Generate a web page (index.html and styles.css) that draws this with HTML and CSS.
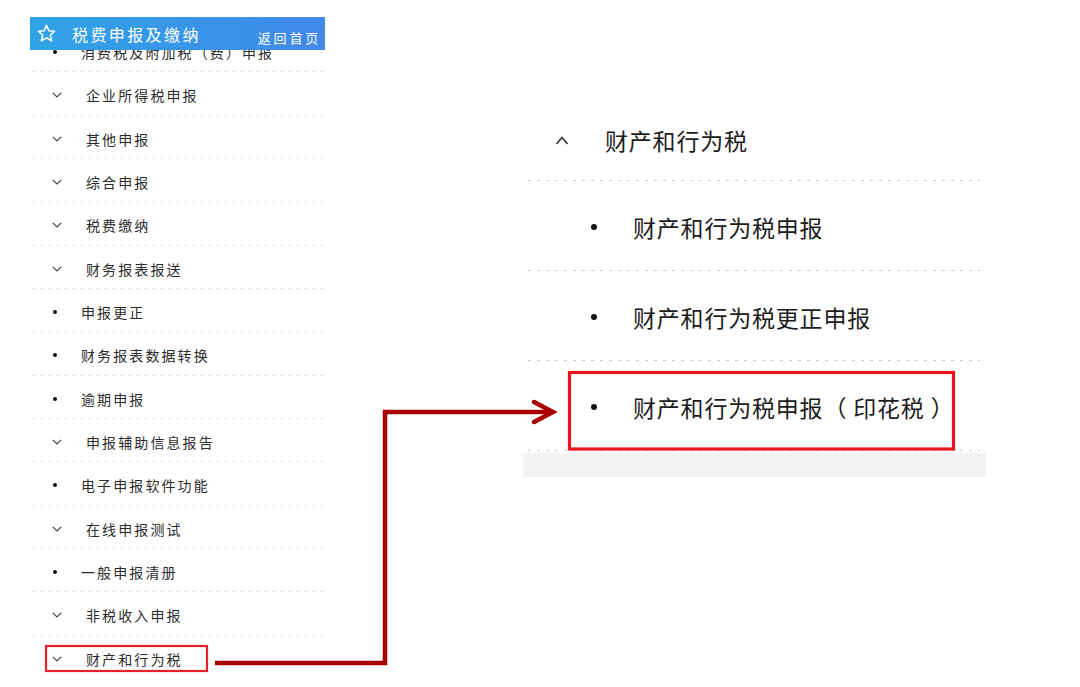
FILE: index.html
```html
<!DOCTYPE html>
<html lang="zh-CN">
<head>
    <meta charset="UTF-8">
    <meta name="viewport" content="width=device-width, initial-scale=1.0">
    <title>税费申报及缴纳</title>
    <link rel="stylesheet" href="styles.css">
</head>
<body>

<div class="page">
    <div class="sidebar">
        <div class="sidebar-header">
            <svg class="star" viewBox="0 0 20 20" width="19" height="19">
                <polygon points="10,1.5 12.6,7.2 18.6,7.6 14,11.6 15.4,17.8 10,14.6 4.6,17.8 6,11.6 1.4,7.6 7.4,7.2" fill="none" stroke="#fff" stroke-width="1.6" stroke-linejoin="round"/>
            </svg>
            <span class="header-title">税费申报及缴纳</span>
            <span class="header-link">返回首页</span>
        </div>
        <ul class="menu">
            <li class="menu-row dot"><i></i><span>消费税及附加税（费）申报</span></li>
            <li class="menu-row fold"><i></i><span>企业所得税申报</span></li>
            <li class="menu-row fold"><i></i><span>其他申报</span></li>
            <li class="menu-row fold"><i></i><span>综合申报</span></li>
            <li class="menu-row fold"><i></i><span>税费缴纳</span></li>
            <li class="menu-row fold"><i></i><span>财务报表报送</span></li>
            <li class="menu-row dot"><i></i><span>申报更正</span></li>
            <li class="menu-row dot"><i></i><span>财务报表数据转换</span></li>
            <li class="menu-row dot"><i></i><span>逾期申报</span></li>
            <li class="menu-row fold"><i></i><span>申报辅助信息报告</span></li>
            <li class="menu-row dot"><i></i><span>电子申报软件功能</span></li>
            <li class="menu-row fold"><i></i><span>在线申报测试</span></li>
            <li class="menu-row dot"><i></i><span>一般申报清册</span></li>
            <li class="menu-row fold"><i></i><span>非税收入申报</span></li>
            <li class="menu-row fold"><i></i><span>财产和行为税</span></li>
        </ul>
    </div>

    <div class="detail">
        <div class="detail-head"><i></i><span>财产和行为税</span></div>
        <ul class="detail-list">
            <li class="detail-row"><i></i><span>财产和行为税申报</span></li>
            <li class="detail-row"><i></i><span>财产和行为税更正申报</span></li>
            <li class="detail-row"><i></i><span>财产和行为税申报<b class="paren open">（</b>印花税<b class="paren close">）</b></span></li>
        </ul>
        <div class="detail-foot"></div>
    </div>

    <!-- annotation layer: boxes and arrow drawn over the screenshot -->
    <svg class="marks" viewBox="0 0 1080 687" width="1080" height="687">
        <rect x="46" y="646" width="161" height="25" fill="none" stroke="#e8202b" stroke-width="2.2"/>
        <rect x="569.5" y="372.5" width="384" height="76.5" fill="none" stroke="#e8141f" stroke-width="3.2"/>
        <polyline points="215,663 385,663 385,412 552,412" fill="none" stroke="#a60000" stroke-width="4.5"/>
        <polyline points="534,402 553,412 534,422" fill="none" stroke="#a60000" stroke-width="4.5" stroke-linecap="round" stroke-linejoin="miter"/>
    </svg>
</div>

</body>
</html>
```

FILE: styles.css
```css
body, html {
    margin: 0;
    background: #fff;
    overflow: hidden;
}
ul {
    list-style: none;
    margin: 0;
    padding: 0;
}
.page {
    position: relative;
    display: flex;
    align-items: flex-start;
    gap: 198px;
    width: 1080px;
    height: 687px;
    padding-left: 30px;
    box-sizing: border-box;
    font-family: "Noto Sans CJK SC", "Noto Sans", sans-serif;
}

/* left menu */
.sidebar {
    width: 295px;
    padding-top: 17px;
}
.sidebar-header {
    position: relative;
    z-index: 2;
    display: flex;
    align-items: center;
    height: 33px;
    padding: 0 4px 0 7px;
    background: linear-gradient(to right, #2fa3e7, #4189e9);
    color: #fff;
}
.star {
    margin-right: 16px;
    margin-top: -1px;
}
.header-title {
    font-size: 16px;
    letter-spacing: 2.4px;
}
.header-link {
    margin-left: auto;
    margin-top: 8px;
    font-size: 13px;
    letter-spacing: 2.8px;
}
.menu {
    margin-top: -21px;
}
.menu-row {
    display: flex;
    align-items: center;
    height: 43.33px;
    margin: 0 2px 0 3px;
    padding-top: 3px;
    box-sizing: border-box;
    font-size: 14px;
    letter-spacing: 2.1px;
    color: #2b2b2b;
    background: repeating-linear-gradient(90deg, #d9d9d9 0 2px, transparent 2px 8px) left bottom / 100% 1px no-repeat;
}
.menu-row:last-child {
    background: none;
}
.menu-row.fold i {
    width: 10px;
    height: 6px;
    margin: 0 24px 0 19px;
    background: url("data:image/svg+xml,%3Csvg xmlns='http://www.w3.org/2000/svg' viewBox='0 0 10 6'%3E%3Cpolyline points='0.8,0.8 5,5 9.2,0.8' fill='none' stroke='%23444' stroke-width='1.2'/%3E%3C/svg%3E") no-repeat center / contain;
}
.menu-row.dot i {
    width: 4px;
    height: 4px;
    margin: 0 24px 0 20px;
    border-radius: 50%;
    background: #111;
}

/* right detail */
.detail {
    width: 463px;
    margin-top: 99px;
}
.detail-head, .detail-row {
    display: flex;
    align-items: center;
    margin: 0 6px 0 5px;
    box-sizing: border-box;
    font-size: 23px;
    letter-spacing: 0.8px;
    color: #1c1c1c;
    background: repeating-linear-gradient(90deg, #cfcfcf 0 3px, transparent 3px 9px) left bottom / 100% 1px no-repeat;
}
.detail-head {
    height: 82px;
}
.detail-head i {
    width: 14px;
    height: 9px;
    margin: 0 36px 0 27px;
    background: url("data:image/svg+xml,%3Csvg xmlns='http://www.w3.org/2000/svg' viewBox='0 0 14 9'%3E%3Cpolyline points='1.5,8 7,1.5 12.5,8' fill='none' stroke='%23333' stroke-width='1.6'/%3E%3C/svg%3E") no-repeat center / contain;
}
.detail-row {
    height: 90px;
    padding-top: 2px;
}
.detail-row i {
    width: 6px;
    height: 6px;
    margin: 0 36px 0 63px;
    border-radius: 50%;
    background: #111;
}
.detail-row .paren {
    font-weight: normal;
}
.detail-row .open {
    margin-right: 6px;
}
.detail-row .close {
    margin-left: 6px;
}
.detail-foot {
    height: 24px;
    margin-top: 2px;
    background: #f3f3f3;
}

.marks {
    position: absolute;
    top: 0;
    left: 0;
    pointer-events: none;
}
```
